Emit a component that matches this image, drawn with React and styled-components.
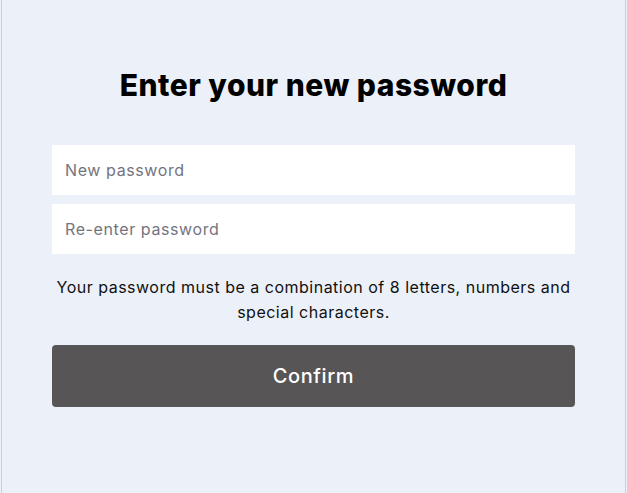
import styled, { createGlobalStyle } from "styled-components";

const GlobalStyle = createGlobalStyle`
  html, body {
    margin: 0;
    padding: 0;
    background: #ecf0f8;
  }
  * {
    box-sizing: border-box;
  }
`;

export default function App() {
  return (
    <>
      <GlobalStyle />
      <Page>
        <Card>
          <Title>Enter your new password</Title>
          <Fields>
            <Input type="password" placeholder="New password" />
            <Input type="password" placeholder="Re-enter password" />
          </Fields>
          <Hint>
            Your password must be a combination of 8 letters, numbers and
            special characters.
          </Hint>
          <ConfirmButton>Confirm</ConfirmButton>
        </Card>
      </Page>
    </>
  );
}

const Page = styled.div`
  padding: 0 1px;
  height: 493px;
`;

const Card = styled.div`
  height: 100%;
  background: #ecf0f8;
  border-left: 1px solid #cfcfd2;
  border-right: 1px solid #cfcfd2;
  padding: 65px 50px 0;
  display: flex;
  flex-direction: column;
  font-family: Inter, "Noto Sans", sans-serif;
`;

const Title = styled.h1`
  margin: 0 0 40px;
  text-align: center;
  font-size: 30px;
  line-height: 40px;
  font-weight: 800;
  letter-spacing: 0.5px;
  color: #000;
`;

const Fields = styled.div`
  display: flex;
  flex-direction: column;
  gap: 9px;
`;

const Input = styled.input`
  height: 50px;
  border: none;
  outline: none;
  background: #fff;
  padding: 0 13px;
  font-family: inherit;
  font-size: 16px;
  letter-spacing: 0.6px;
  color: #333;
  &::placeholder {
    color: #747480;
  }
`;

const Hint = styled.p`
  margin: 21px 0 20px;
  text-align: center;
  font-size: 16px;
  line-height: 25px;
  letter-spacing: 0.5px;
  color: #111;
`;

const ConfirmButton = styled.button`
  height: 62px;
  border: none;
  border-radius: 4px;
  background: #575556;
  color: #fff;
  font-family: inherit;
  font-size: 20px;
  font-weight: 500;
  letter-spacing: 0.6px;
  cursor: pointer;
`;
